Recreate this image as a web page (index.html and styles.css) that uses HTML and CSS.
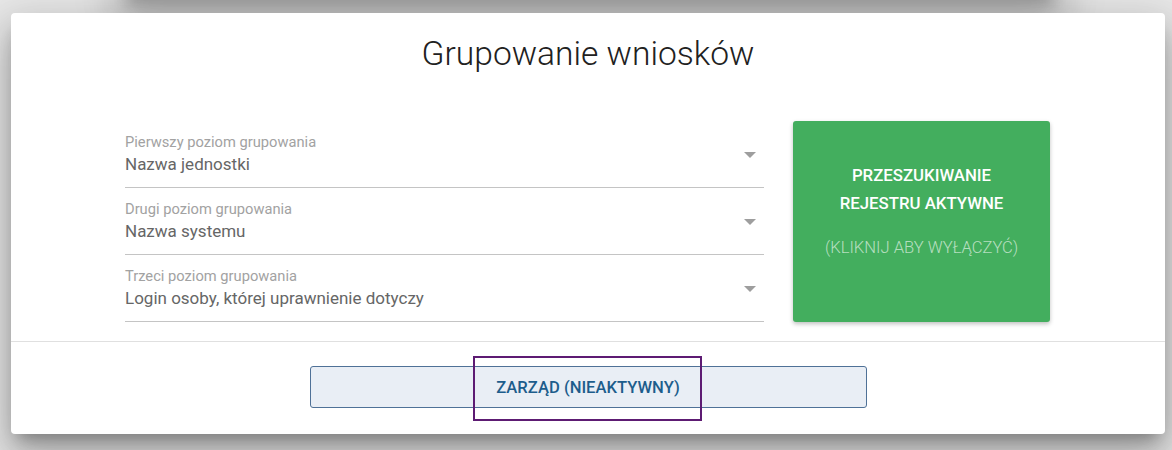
FILE: index.html
```html
<!DOCTYPE html>
<html lang="pl">

<head>
    <meta charset="UTF-8" />
    <meta name="viewport" content="width=device-width, initial-scale=1.0" />
    <title>Grupowanie wniosków</title>
    <link rel="stylesheet" href="styles.css">
</head>

<body>
    <div class="page">
        <div class="prev-card"></div>

        <div class="card">
            <h1>Grupowanie wniosków</h1>

            <div class="grouping">
                <div class="fields">
                    <div class="field">
                        <div class="field-text">
                            <div class="field-label">Pierwszy poziom grupowania</div>
                            <div class="field-value">Nazwa jednostki</div>
                        </div>
                        <span class="arrow"></span>
                    </div>
                    <div class="field">
                        <div class="field-text">
                            <div class="field-label">Drugi poziom grupowania</div>
                            <div class="field-value">Nazwa systemu</div>
                        </div>
                        <span class="arrow"></span>
                    </div>
                    <div class="field">
                        <div class="field-text">
                            <div class="field-label">Trzeci poziom grupowania</div>
                            <div class="field-value">Login osoby, której uprawnienie dotyczy</div>
                        </div>
                        <span class="arrow"></span>
                    </div>
                </div>

                <button class="search-btn">
                    <span class="search-title">PRZESZUKIWANIE<br>REJESTRU AKTYWNE</span>
                    <span class="search-hint">(KLIKNIJ ABY WYŁĄCZYĆ)</span>
                </button>
            </div>

            <div class="footer">
                <div class="board-wrap">
                    <button class="board-btn">ZARZĄD (NIEAKTYWNY)</button>
                    <div class="focus-box"></div>
                </div>
            </div>
        </div>
    </div>
</body>

</html>
```

FILE: styles.css
```css
html,
body {
    margin: 0;
    padding: 0;
    background: #e8e8e8;
    font-family: Roboto, 'Noto Sans', sans-serif;
}

.page {
    height: 450px;
    overflow: hidden;
    padding-top: 0.1px;
}

.prev-card {
    height: 40px;
    margin: -40px 112px 0 120px;
    background: white;
    border-radius: 4px;
    box-shadow: 0 11px 15px -7px rgba(0, 0, 0, 0.2),
        0 24px 38px 3px rgba(0, 0, 0, 0.14),
        0 9px 46px 8px rgba(0, 0, 0, 0.12);
}

.card {
    position: relative;
    width: 1154px;
    height: 421px;
    margin: 13px 0 0 11px;
    box-sizing: border-box;
    padding-top: 21px;
    background: white;
    border-radius: 4px;
    box-shadow: 0 11px 15px -7px rgba(0, 0, 0, 0.28),
        0 24px 38px 3px rgba(0, 0, 0, 0.2),
        0 9px 46px 8px rgba(0, 0, 0, 0.12);
}

h1 {
    margin: 0;
    text-align: center;
    font-size: 33.6px;
    line-height: 40px;
    font-weight: 300;
    color: #212121;
}

.grouping {
    display: flex;
    gap: 29px;
    margin: 47px 115px 0 114px;
}

.fields {
    width: 639px;
}

.field {
    display: flex;
    padding-top: 13px;
    padding-bottom: 10px;
    border-bottom: 1px solid #c4c4c4;
}

.field-text {
    flex: 1;
}

.field-label {
    font-size: 14.7px;
    line-height: 16px;
    color: #a2a2a2;
    margin-bottom: 2px;
}

.field-value {
    font-size: 17px;
    line-height: 25px;
    color: #666666;
}

.arrow {
    width: 0;
    height: 0;
    margin: 18px 8px 0 0;
    border-left: 6px solid transparent;
    border-right: 6px solid transparent;
    border-top: 6px solid #9e9e9e;
}

.search-btn {
    width: 257px;
    display: flex;
    flex-direction: column;
    align-items: center;
    justify-content: center;
    gap: 21px;
    padding: 0 0 24px;
    border: none;
    border-radius: 3px;
    background: #43ae5e;
    color: white;
    font-family: inherit;
    cursor: pointer;
    box-shadow: 0 2px 4px rgba(0, 0, 0, 0.25);
}

.search-title {
    font-size: 16.8px;
    line-height: 28px;
    font-weight: 500;
}

.search-hint {
    font-size: 16.6px;
    line-height: 20px;
    font-weight: 300;
    color: rgba(255, 255, 255, 0.62);
}

.footer {
    margin-top: 19px;
    border-top: 1px solid #e0e0e0;
    padding-top: 24px;
    display: flex;
    justify-content: center;
}

.board-wrap {
    position: relative;
}

.board-btn {
    width: 557px;
    height: 42px;
    background: #e9eef5;
    border: 1px solid #4f7197;
    border-radius: 3px;
    color: #1d5d8c;
    font-family: inherit;
    font-size: 16.6px;
    font-weight: 500;
    cursor: pointer;
}

.focus-box {
    position: absolute;
    left: 163px;
    top: -10px;
    width: 225px;
    height: 61px;
    border: 2px solid #5d1b73;
    pointer-events: none;
}
```
